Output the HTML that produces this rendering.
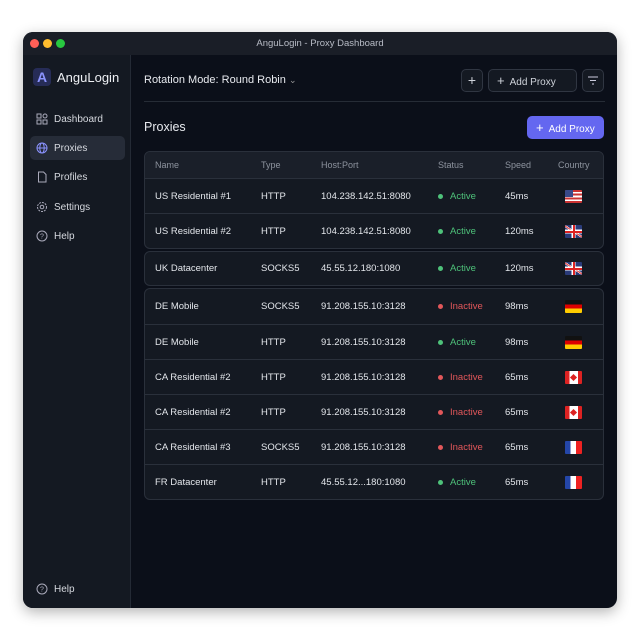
<!DOCTYPE html><html><head><style>
*{margin:0;padding:0;box-sizing:border-box}
body{width:640px;height:640px;background:#fff;font-family:"Liberation Sans",sans-serif;position:relative;overflow:hidden}
.win{position:absolute;left:23px;top:32px;width:594px;height:576px;background:#0b0f19;border-radius:10px;overflow:hidden;box-shadow:0 4px 14px rgba(0,0,0,.3)}
.tb{height:23px;background:#1a1e27;text-align:center;color:#b8bcc6;font-size:9.5px;line-height:23px;position:relative}
.dot{position:absolute;top:7px;width:9px;height:9px;border-radius:50%}
.side{position:absolute;left:0;top:23px;width:108px;bottom:0;background:#141922;border-right:1px solid #242a35}
.logo{position:absolute;left:10px;top:13px;width:18px;height:18px;border-radius:4px;background:#262c57;color:#8b93ff;font-weight:bold;font-size:14px;text-align:center;line-height:18px}
.brand{position:absolute;left:34px;top:15px;color:#eef0f4;font-size:13px}
.nav{position:absolute;left:7px;width:95px;height:24px;color:#d6d9df;font-size:10px;line-height:26px;padding-left:24px;border-radius:5px}
.nav svg{position:absolute;left:6px;top:6px}
.main{position:absolute;left:109px;top:23px;right:0;bottom:0}
.t{position:absolute;color:#e8eaef}
.btn{position:absolute;border:1px solid #303642;border-radius:5px;background:#141922;color:#cfd3da;font-size:10px}
.grp{position:absolute;left:12px;width:460px;border:1px solid #2a303b;border-radius:6px;background:#141922;overflow:hidden}
.row{height:35px;border-top:1px solid #2a303b;position:relative;font-size:9.5px;color:#e3e6eb}
.row:first-child{border-top:none}
.row span{position:absolute;top:0;line-height:35px}
.hd{height:26px;background:#1a1f29;color:#8d939e;font-size:9px}
.hd span{line-height:26px}
.c1{left:10px}.c2{left:116px}.c3{left:176px}.c4{left:293px}.c5{left:360px}.c6{left:420px}
.st i{display:inline-block;width:5px;height:5px;border-radius:50%;margin-right:7px;vertical-align:0px}
.a{color:#4ec27a}.a i{background:#4ec27a}.n{color:#e2575a}.n i{background:#e2575a}
.flag{position:absolute;left:420px;top:11px;width:17px;height:13px;border-radius:1px;overflow:hidden}
</style></head><body>
<div class="win">
<div class="tb"><div class="dot" style="left:7px;background:#fe5f57"></div><div class="dot" style="left:20px;background:#febc2e"></div><div class="dot" style="left:33px;background:#28c840"></div>AnguLogin - Proxy Dashboard</div>
<div class="side">
<div class="logo">A</div><div class="brand">AnguLogin</div>
<div class="nav" style="top:52px"><svg width="12" height="12" viewBox="0 0 12 12" fill="none" stroke="#aab" stroke-width="1"><rect x="1" y="1" width="4" height="4"/><circle cx="9" cy="3" r="2"/><rect x="1" y="7" width="4" height="4"/><rect x="7" y="7" width="4" height="4"/></svg>Dashboard</div>
<div class="nav" style="top:81px;background:#262c38"><svg width="12" height="12" viewBox="0 0 12 12" fill="none" stroke="#8b93ff" stroke-width="1"><circle cx="6" cy="6" r="5"/><ellipse cx="6" cy="6" rx="2.2" ry="5"/><path d="M1 6h10"/></svg>Proxies</div>
<div class="nav" style="top:110px"><svg width="12" height="12" viewBox="0 0 12 12" fill="none" stroke="#aab" stroke-width="1"><path d="M2.5 1h5l2.5 2.5V11h-7.5z"/></svg>Profiles</div>
<div class="nav" style="top:140px"><svg width="12" height="12" viewBox="0 0 12 12" fill="none" stroke="#aab" stroke-width="1"><circle cx="6" cy="6" r="4.5" stroke-dasharray="2 1"/><circle cx="6" cy="6" r="1.8"/></svg>Settings</div>
<div class="nav" style="top:169px"><svg width="12" height="12" viewBox="0 0 12 12" fill="none" stroke="#aab" stroke-width="1"><circle cx="6" cy="6" r="5"/><text x="6" y="8.5" font-size="7" fill="#aab" stroke="none" text-anchor="middle">?</text></svg>Help</div>
<div class="nav" style="top:522px"><svg width="12" height="12" viewBox="0 0 12 12" fill="none" stroke="#aab" stroke-width="1"><circle cx="6" cy="6" r="5"/><text x="6" y="8.5" font-size="7" fill="#aab" stroke="none" text-anchor="middle">?</text></svg>Help</div>
</div>
<div class="main">
<div class="t" style="left:12px;top:19px;font-size:11px">Rotation Mode: Round Robin <span style="color:#999;font-size:9px">&#8964;</span></div>
<div class="btn" style="left:329px;top:14px;width:22px;height:23px;text-align:center;line-height:21px;font-size:14px">+</div>
<div class="btn" style="left:356px;top:14px;width:89px;height:23px;line-height:21px;padding-left:8px"><span style="font-size:13px">+</span>&nbsp; Add Proxy</div>
<div class="btn" style="left:450px;top:14px;width:22px;height:23px"><svg width="20" height="21" viewBox="0 0 20 21" stroke="#ccd" stroke-width="1"><path d="M5 7h10M7 10.5h6M9 14h2"/></svg></div>
<div style="position:absolute;left:12px;right:12px;top:46px;height:1px;background:#262c36"></div>
<div class="t" style="left:12px;top:65px;font-size:12.5px">Proxies</div>
<div style="position:absolute;left:395px;top:61px;width:77px;height:23px;background:#6467f0;border-radius:5px;color:#fff;font-size:10px;line-height:23px;padding-left:9px"><span style="font-size:13px">+</span>&nbsp; Add Proxy</div>
<div class="grp" style="top:96px">
<div class="row hd"><span class="c1">Name</span><span class="c2">Type</span><span class="c3">Host:Port</span><span class="c4">Status</span><span class="c5">Speed</span><span class="c6" style="left:413px">Country</span></div>
<div class="row"><span class="c1">US Residential #1</span><span class="c2">HTTP</span><span class="c3">104.238.142.51:8080</span><span class="c4 st a"><i></i>Active</span><span class="c5">45ms</span><div class="flag" style="background:repeating-linear-gradient(#c33 0 1.85px,#fff 1.85px 3.7px)"><div style="width:8px;height:7px;background:#3a4a8a"></div></div></div>
<div class="row"><span class="c1">US Residential #2</span><span class="c2">HTTP</span><span class="c3">104.238.142.51:8080</span><span class="c4 st a"><i></i>Active</span><span class="c5">120ms</span><div class="flag uk"></div></div>
</div>
<div class="grp" style="top:196px"><div class="row" style="height:33px"><span class="c1" style="line-height:33px">UK Datacenter</span><span class="c2" style="line-height:33px">SOCKS5</span><span class="c3" style="line-height:33px">45.55.12.180:1080</span><span class="c4 st a" style="line-height:33px"><i></i>Active</span><span class="c5" style="line-height:33px">120ms</span><div class="flag uk" style="top:10px"></div></div></div>
<div class="grp" style="top:233px">
<div class="row"><span class="c1">DE Mobile</span><span class="c2">SOCKS5</span><span class="c3">91.208.155.10:3128</span><span class="c4 st n"><i></i>Inactive</span><span class="c5">98ms</span><div class="flag de"></div></div>
<div class="row"><span class="c1">DE Mobile</span><span class="c2">HTTP</span><span class="c3">91.208.155.10:3128</span><span class="c4 st a"><i></i>Active</span><span class="c5">98ms</span><div class="flag de"></div></div>
<div class="row"><span class="c1">CA Residential #2</span><span class="c2">HTTP</span><span class="c3">91.208.155.10:3128</span><span class="c4 st n"><i></i>Inactive</span><span class="c5">65ms</span><div class="flag ca"></div></div>
<div class="row"><span class="c1">CA Residential #2</span><span class="c2">HTTP</span><span class="c3">91.208.155.10:3128</span><span class="c4 st n"><i></i>Inactive</span><span class="c5">65ms</span><div class="flag ca"></div></div>
<div class="row"><span class="c1">CA Residential #3</span><span class="c2">SOCKS5</span><span class="c3">91.208.155.10:3128</span><span class="c4 st n"><i></i>Inactive</span><span class="c5">65ms</span><div class="flag fr"></div></div>
<div class="row"><span class="c1">FR Datacenter</span><span class="c2">HTTP</span><span class="c3">45.55.12...180:1080</span><span class="c4 st a"><i></i>Active</span><span class="c5">65ms</span><div class="flag fr"></div></div>
</div>
</div>
</div>
<style>
.uk{background:linear-gradient(90deg,transparent 6.5px,#fff 6.5px,#fff 10.5px,transparent 10.5px),linear-gradient(transparent 4.5px,#fff 4.5px,#fff 8.5px,transparent 8.5px),linear-gradient(33deg,#2a3b7a 45%,#fff 45%,#d22 50%,#fff 55%,#2a3b7a 55%)}
.uk::after{content:"";position:absolute;left:7.5px;top:0;width:2px;height:13px;background:#d22}
.uk::before{content:"";position:absolute;left:0;top:5.5px;width:17px;height:2px;background:#d22}
.de{background:linear-gradient(#111 33%,#d00 33% 66%,#fc0 66%)}
.ca{background:linear-gradient(90deg,#d22 25%,#fff 25% 75%,#d22 75%)}
.ca::after{content:"";position:absolute;left:6px;top:4px;width:5px;height:5px;background:#d22;transform:rotate(45deg)}
.fr{background:linear-gradient(90deg,#2446a8 33%,#fff 33% 66%,#e22 66%)}
</style>
</body></html>
